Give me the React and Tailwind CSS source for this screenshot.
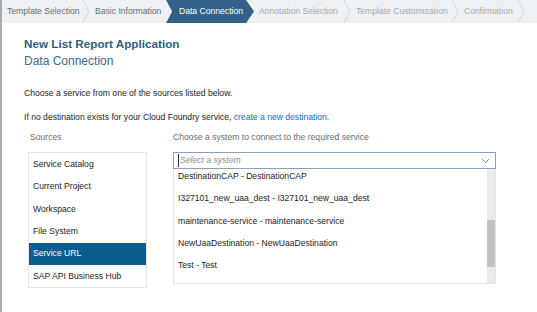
import React from "react";

const steps = [
  { label: "Template Selection", state: "done", w: "w-[88px]" },
  { label: "Basic Information", state: "done", w: "w-[80px]" },
  { label: "Data Connection", state: "active", w: "w-[88px]" },
  { label: "Annotation Selection", state: "todo", w: "w-[97px]" },
  { label: "Template Customization", state: "todo", w: "w-[108px]" },
  { label: "Confirmation", state: "todo", w: "w-[66px]" },
];

const sources = [
  "Service Catalog",
  "Current Project",
  "Workspace",
  "File System",
  "Service URL",
  "SAP API Business Hub",
];

const systems = [
  "DestinationCAP - DestinationCAP",
  "I327101_new_uaa_dest - I327101_new_uaa_dest",
  "maintenance-service - maintenance-service",
  "NewUaaDestination - NewUaaDestination",
  "Test - Test",
];

function Chevron() {
  return (
    <svg width="8" height="23" viewBox="0 0 8 23" className="shrink-0">
      <path d="M1 0 L7 11.5 L1 23" fill="none" stroke="#c9cdd2" strokeWidth="0.8" />
    </svg>
  );
}

export default function App() {
  return (
    <div className="flex h-[312px] w-[537px] overflow-hidden bg-white font-['Liberation_Sans',Arial,sans-serif]">
      <div className="w-[2px] shrink-0 bg-[#a9a9a9]" />
      <div className="flex min-w-0 flex-1 flex-col">
        {/* wizard steps */}
        <div className="flex h-[23px] shrink-0 items-center bg-[#eef1f4] text-[8.6px]">
          {steps.map((s) =>
            s.state === "active" ? (
              <div
                key={s.label}
                className={`${s.w} -ml-[4px] flex h-full shrink-0 items-center bg-[#32628a] pl-[13px] text-white [clip-path:polygon(0_0,91%_0,100%_50%,91%_100%,0_100%,7%_50%)]`}
              >
                {s.label}
              </div>
            ) : (
              <div key={s.label} className={`${s.w} flex h-full shrink-0 items-center justify-between pl-[5px]`}>
                <span className={s.state === "done" ? "text-[#6a6d70]" : "text-[#a5a9ad]"}>{s.label}</span>
                {s.label !== "Basic Information" && <Chevron />}
              </div>
            )
          )}
        </div>

        <div className="flex flex-col pl-[22px] pr-[30px]">
          <h1 className="mt-[13px] text-[11.7px] font-bold leading-[15px] text-[#2f5d85]">
            New List Report Application
          </h1>
          <h2 className="mt-[3px] text-[12px] leading-[15px] text-[#3b6a93]">Data Connection</h2>

          <p className="mt-[18px] text-[8.6px] leading-[12px] text-[#1d1d1d]">
            Choose a service from one of the sources listed below.
          </p>
          <p className="mt-[12px] text-[8.6px] leading-[12px] text-[#1d1d1d]">
            If no destination exists for your Cloud Foundry service,{" "}
            <span className="text-[#0a6ed1]">create a new destination.</span>
          </p>

          <div className="mt-[8px] flex gap-[26px]">
            <div className="ml-[4px] flex w-[119px] shrink-0 flex-col">
              <div className="pl-[2px] text-[8.6px] leading-[12px] text-[#6a6d70]">Sources</div>
              <div className="mt-[9px] flex flex-col border border-[#e4e4e4] text-[8.6px] text-[#1d1d1d]">
                {sources.map((s) => (
                  <div
                    key={s}
                    className={`flex h-[22.4px] items-center pl-[4px] ${
                      s === "Service URL" ? "bg-[#0b5c8f] text-white" : ""
                    }`}
                  >
                    {s}
                  </div>
                ))}
              </div>
            </div>

            <div className="flex w-[323px] shrink-0 flex-col">
              <div className="text-[8.6px] leading-[12px] text-[#6a6d70]">
                Choose a system to connect to the required service
              </div>
              <div className="mt-[9px] flex h-[17px] items-center justify-between border border-[#8aa2b8] pl-[4px] pr-[5px]">
                <span className="border-l border-[#333] pl-[1px] text-[8.6px] italic text-[#8a8d90]">
                  Select a system
                </span>
                <svg width="9" height="6" viewBox="0 0 9 6">
                  <path d="M0.8 1 L4.5 4.6 L8.2 1" fill="none" stroke="#6a7f92" strokeWidth="1" />
                </svg>
              </div>
              <div className="flex h-[115px] overflow-hidden border border-t-0 border-[#e4e4e4]">
                <div className="-mt-[4px] flex flex-1 flex-col text-[8.6px] text-[#1d1d1d]">
                  {systems.map((s) => (
                    <div key={s} className="flex h-[22.4px] shrink-0 items-center pl-[4px]">
                      {s}
                    </div>
                  ))}
                </div>
                <div className="flex w-[8px] shrink-0 flex-col bg-[#ebebeb] pt-[51px]">
                  <div className="h-[47px] bg-[#c2c2c2]" />
                </div>
              </div>
            </div>
          </div>
        </div>
      </div>
    </div>
  );
}
